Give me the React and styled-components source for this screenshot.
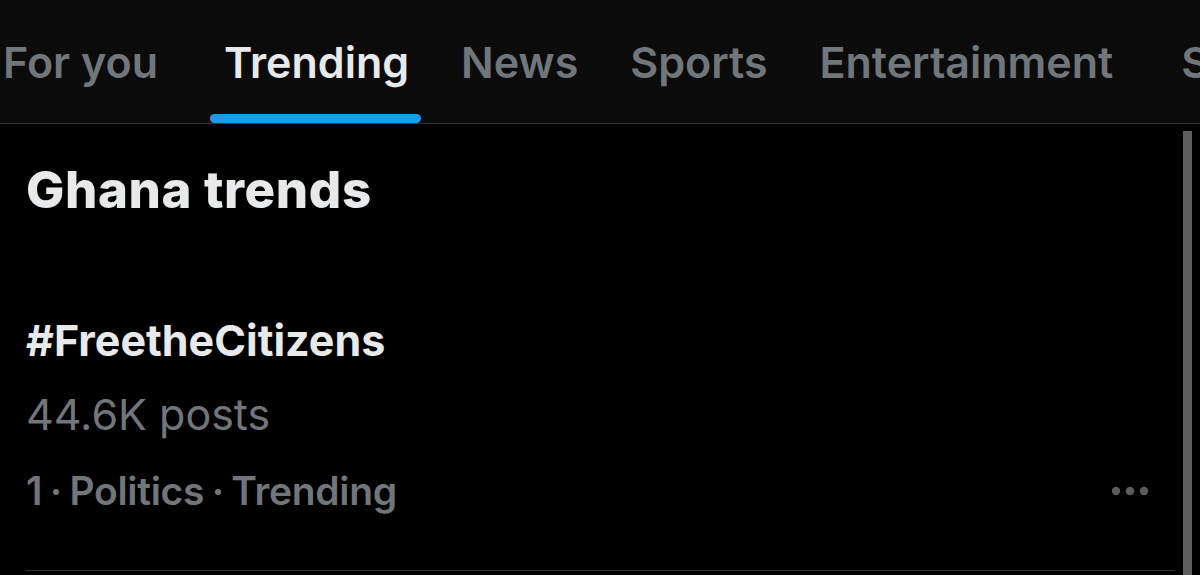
import React from "react";
import styled, { createGlobalStyle } from "styled-components";

const GlobalStyle = createGlobalStyle`
  html, body {
    margin: 0;
    padding: 0;
    background: #000;
    overflow: hidden;
  }
  body {
    font-family: Inter, "Noto Sans", "Liberation Sans", sans-serif;
    color: #e7e9ea;
  }
`;

const Page = styled.div`
  width: 1200px;
  height: 575px;
  display: flex;
  flex-direction: column;
  background: #000;
`;

const TabBar = styled.nav`
  height: 123px;
  flex-shrink: 0;
  display: flex;
  align-items: flex-end;
  gap: 52px;
  padding-left: 3px;
  background: #0b0b0b;
  border-bottom: 1px solid #333639;
  overflow: hidden;
  white-space: nowrap;
`;

const Tab = styled.div`
  position: relative;
  height: 123px;
  display: flex;
  align-items: center;
  padding-top: 2px;
  font-size: 43px;
  font-weight: 600;
  letter-spacing: 0;
  color: ${(p) => (p.$active ? "#e7e9ea" : "#71767b")};

  &:first-child {
    margin-right: 14px;
  }

  &:last-child {
    margin-left: 16px;
  }

  &::after {
    content: "";
    display: ${(p) => (p.$active ? "block" : "none")};
    position: absolute;
    left: -14px;
    right: -12px;
    bottom: 0;
    height: 9px;
    border-radius: 5px;
    background: #1d9bf0;
  }
`;

const Body = styled.div`
  flex: 1;
  display: flex;
  min-height: 0;
`;

const Feed = styled.main`
  flex: 1;
  display: flex;
  flex-direction: column;
  padding-left: 26px;
`;

const Heading = styled.h2`
  margin: 36px 0 0;
  font-size: 51px;
  font-weight: 800;
  line-height: 60px;
  letter-spacing: 0.6px;
`;

const TrendItem = styled.article`
  position: relative;
  margin-top: 94px;
  padding-bottom: 53px;
  border-bottom: 1px solid #2f3336;
  display: flex;
  flex-direction: column;
`;

const TrendName = styled.div`
  font-size: 43px;
  font-weight: 700;
  line-height: 52px;
`;

const PostCount = styled.div`
  margin-top: 22px;
  font-size: 43px;
  font-weight: 400;
  line-height: 52px;
  color: #71767b;
`;

const Meta = styled.div`
  margin-top: 25px;
  font-size: 39px;
  font-weight: 600;
  line-height: 52px;
  letter-spacing: -0.3px;
  word-spacing: -2px;
  color: #71767b;
`;

const MoreButton = styled.button`
  position: absolute;
  right: 26px;
  bottom: 74px;
  width: 38px;
  height: 10px;
  padding: 0;
  border: none;
  background: transparent;
  display: flex;
`;

const Scrollbar = styled.div`
  width: 9px;
  margin: 7px 8px 0 8px;
  background: #5e5e5e;
`;

function MoreIcon() {
  return (
    <svg width="38" height="10" viewBox="0 0 38 10">
      <circle cx="5" cy="5" r="4.2" fill="#5c5c5c" />
      <circle cx="19" cy="5" r="4.2" fill="#5c5c5c" />
      <circle cx="33" cy="5" r="4.2" fill="#5c5c5c" />
    </svg>
  );
}

const tabs = ["For you", "Trending", "News", "Sports", "Entertainment", "Sports"];

export default function App() {
  return (
    <Page>
      <GlobalStyle />
      <TabBar>
        {tabs.map((t, i) => (
          <Tab key={i} $active={t === "Trending"}>
            {t}
          </Tab>
        ))}
      </TabBar>
      <Body>
        <Feed>
          <Heading>Ghana trends</Heading>
          <TrendItem>
            <TrendName>#FreetheCitizens</TrendName>
            <PostCount>44.6K posts</PostCount>
            <Meta>1 · Politics · Trending</Meta>
            <MoreButton aria-label="More">
              <MoreIcon />
            </MoreButton>
          </TrendItem>
        </Feed>
        <Scrollbar />
      </Body>
    </Page>
  );
}
